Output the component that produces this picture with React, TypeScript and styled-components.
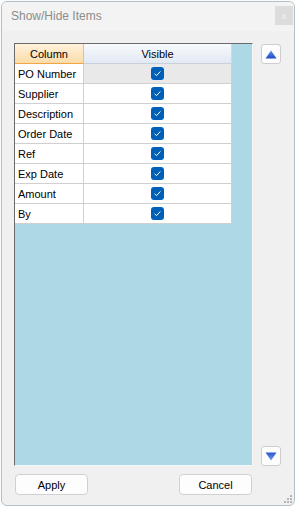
import React, { useState } from 'react';
import styled, { createGlobalStyle } from 'styled-components';

const GlobalStyle = createGlobalStyle`
  html, body {
    margin: 0;
    padding: 0;
    background: #fbfbfb;
  }

  body {
    font-family: 'Liberation Sans', Arial, sans-serif;
  }
`;

const ITEMS = ['PO Number', 'Supplier', 'Description', 'Order Date', 'Ref', 'Exp Date', 'Amount', 'By'];

const Window = styled.div`
  position: relative;
  box-sizing: border-box;
  margin: 1px 0 0 1px;
  width: 294px;
  height: 505px;
  border: 1px solid #b4c0c8;
  border-radius: 6px;
  background: #f0f0f0;
  display: flex;
  flex-direction: column;
  overflow: hidden;
`;

const TitleBar = styled.div`
  height: 29px;
  flex: none;
  display: flex;
  align-items: center;
  justify-content: space-between;
  padding: 0 0 0 9px;
  background: #f3f3f3;
`;

const Title = styled.span`
  font-size: 12px;
  color: #8c8c8c;
  margin-top: -2px;
`;

const CloseButton = styled.div`
  width: 18px;
  height: 19px;
  margin: -2px 1px 0 0;
  background: #dcdcdc;
  color: #f4f4f4;
  font-size: 9px;
  display: flex;
  align-items: center;
  justify-content: center;
`;

const Body = styled.div`
  flex: 1;
  display: flex;
  gap: 8px;
  padding: 12px 0 0 12px;
  min-height: 0;
`;

const GridPanel = styled.div`
  box-sizing: border-box;
  width: 239px;
  height: 100%;
  background: #add8e6;
  border-left: 1px solid #6b6b6b;
  border-top: 1px solid #6b6b6b;
  border-right: 1px solid #f7f7f7;
  border-bottom: 1px solid #f7f7f7;
`;

const Table = styled.div`
  width: 217px;
`;

const Row = styled.div`
  display: grid;
  grid-template-columns: 69px 148px;
  height: 20px;
`;

const HeaderCell = styled.div<{ $active?: boolean }>`
  box-sizing: border-box;
  display: flex;
  align-items: center;
  justify-content: center;
  font-size: 11px;
  color: #000;
  background: ${(p) => (p.$active
    ? 'linear-gradient(#fff1dc, #fbdca8)'
    : 'linear-gradient(#f7f9fc, #e2e9f3)')};
  border-right: 1px solid ${(p) => (p.$active ? '#f4bd78' : '#d2d8e0')};
  border-bottom: 1px solid ${(p) => (p.$active ? '#f1a545' : '#c8d0da')};
`;

const Cell = styled.div<{ $selected?: boolean; $center?: boolean }>`
  box-sizing: border-box;
  display: flex;
  align-items: center;
  justify-content: ${(p) => (p.$center ? 'center' : 'flex-start')};
  padding-left: ${(p) => (p.$center ? '0' : '3px')};
  font-size: 11px;
  color: #000;
  background: ${(p) => (p.$selected ? '#e9e9e9' : '#ffffff')};
  border-right: 1px solid #d0d0d0;
  border-bottom: 1px solid #d0d0d0;
  white-space: nowrap;
  overflow: hidden;
`;

const CheckBox = styled.div`
  width: 13px;
  height: 13px;
  border-radius: 3px;
  background: #005fb8;
  display: flex;
  align-items: center;
  justify-content: center;
`;

const SideColumn = styled.div`
  width: 20px;
  display: flex;
  flex-direction: column;
  justify-content: space-between;
  padding-top: 1px;
`;

const ArrowButton = styled.div`
  box-sizing: border-box;
  width: 20px;
  height: 20px;
  border: 1px solid #cdcdcd;
  border-radius: 3px;
  background: #fdfdfd;
  display: flex;
  align-items: center;
  justify-content: center;
`;

const Footer = styled.div`
  height: 39px;
  flex: none;
  display: flex;
  justify-content: space-between;
  padding: 8px 42px 0 13px;
  box-sizing: border-box;
`;

const Button = styled.div`
  box-sizing: border-box;
  width: 73px;
  height: 21px;
  border: 1px solid #d0d0d0;
  border-radius: 4px;
  background: #fdfdfd;
  font-size: 11px;
  color: #000;
  display: flex;
  align-items: center;
  justify-content: center;
`;

const Grip = styled.svg`
  position: absolute;
  right: 2px;
  bottom: 2px;
`;

const Check = () => (
  <svg width='9' height='9' viewBox='0 0 9 9'>
    <path d='M1.6 4.8 L3.6 6.6 L7.4 2.4' fill='none' stroke='#ffffff' strokeWidth='1' />
  </svg>
);

const Arrow = ({ down }: { down?: boolean }) => (
  <svg width='12' height='9' viewBox='0 0 12 9'>
    <defs>
      <linearGradient id={down ? 'gd' : 'gu'} x1='0' y1='0' x2='0' y2='1'>
        <stop offset='0' stopColor={down ? '#2a55c8' : '#5d8ff0'} />
        <stop offset='1' stopColor={down ? '#6f9ff2' : '#1f4cc0'} />
      </linearGradient>
    </defs>
    <path d={down ? 'M0.5 0.5 L11.5 0.5 L6 8.5 Z' : 'M6 0.5 L11.5 8.5 L0.5 8.5 Z'} fill={`url(#${down ? 'gd' : 'gu'})`} />
  </svg>
);

const App: React.FC = () => {
  const [visible] = useState<boolean[]>(ITEMS.map(() => true));

  return (
    <>
      <GlobalStyle />
      <Window>
        <TitleBar>
          <Title>Show/Hide Items</Title>
          <CloseButton>x</CloseButton>
        </TitleBar>
        <Body>
          <GridPanel>
            <Table>
              <Row>
                <HeaderCell $active>Column</HeaderCell>
                <HeaderCell>Visible</HeaderCell>
              </Row>
              {ITEMS.map((name, i) => (
                <Row key={name}>
                  <Cell>{name}</Cell>
                  <Cell $center $selected={i === 0}>
                    {visible[i] && <CheckBox><Check /></CheckBox>}
                  </Cell>
                </Row>
              ))}
            </Table>
          </GridPanel>
          <SideColumn>
            <ArrowButton><Arrow /></ArrowButton>
            <ArrowButton><Arrow down /></ArrowButton>
          </SideColumn>
        </Body>
        <Footer>
          <Button>Apply</Button>
          <Button>Cancel</Button>
        </Footer>
        <Grip width='8' height='8' viewBox='0 0 8 8'>
          {[[6, 0], [6, 3], [3, 3], [6, 6], [3, 6], [0, 6]].map(([x, y]) => (
            <rect key={`${x}-${y}`} x={x} y={y} width='2' height='2' fill='#b5b5b5' />
          ))}
        </Grip>
      </Window>
    </>
  );
};

export default App;
